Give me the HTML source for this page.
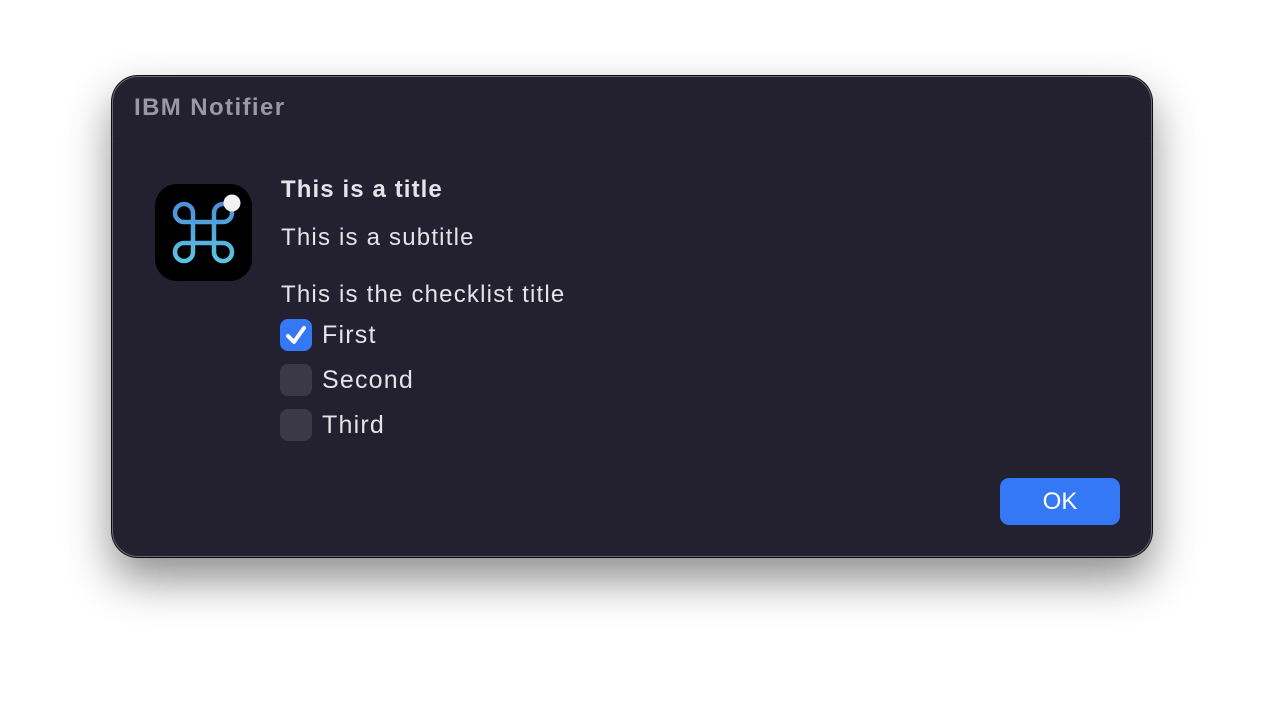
<!DOCTYPE html>
<html><head><style>
body{margin:0;width:1264px;height:706px;background:#fff;position:relative;overflow:hidden;font-family:"Liberation Sans",sans-serif}
.win{position:absolute;left:112px;top:76px;width:1038px;height:479px;background:#232130;border:1px solid #6b6a72;border-radius:26px;box-shadow:0 22px 45px rgba(0,0,0,.45),0 0 0 1px #111}
.t{position:absolute;color:#e4e3e8;white-space:nowrap;letter-spacing:1.2px}
.cb{position:absolute;left:280px;width:32px;height:32px;border-radius:8px;background:#3a3945}
</style></head><body>
<div class="win"></div>
<div class="t" style="left:134px;top:94px;font-size:24px;font-weight:bold;color:#9a98a6;letter-spacing:1.4px">IBM Notifier</div>
<div style="position:absolute;left:113px;top:138px;width:1038px;height:1px;background:#1f1e2a"></div>
<div style="position:absolute;left:155px;top:184px;width:97px;height:97px;border-radius:22px;background:#000"></div>
<svg style="position:absolute;left:155px;top:184px" width="97" height="97" viewBox="0 0 97 97">
<defs><linearGradient id="g" x1="0" y1="0" x2="0" y2="1"><stop offset="0" stop-color="#4a90d9"/><stop offset="1" stop-color="#5ec2e0"/></linearGradient></defs>
<path d="M38 38 V59 M59 38 V59 M38 38 H59 M38 59 H59 M38 38 H29 A9 9 0 1 1 38 29 V38 M59 38 V29 A9 9 0 1 1 68 38 H59 M38 59 H29 A9 9 0 1 0 38 68 V59 M59 59 V68 A9 9 0 1 0 68 59 H59" fill="none" stroke="url(#g)" stroke-width="4.5"/>
<circle cx="77" cy="19" r="8.5" fill="#f2f2f2"/>
</svg>
<div class="t" style="left:281px;top:176px;font-size:24px;font-weight:bold;letter-spacing:1.1px">This is a title</div>
<div class="t" style="left:281px;top:224px;font-size:24px">This is a subtitle</div>
<div class="t" style="left:281px;top:281px;font-size:24px">This is the checklist title</div>
<div class="cb" style="top:319px;background:#3478f6"></div>
<svg style="position:absolute;left:280px;top:319px" width="32" height="32"><path d="M8 17 L14 23 L24 9" fill="none" stroke="#fff" stroke-width="4" stroke-linecap="round" stroke-linejoin="round"/></svg>
<div class="t" style="left:322px;top:321px;font-size:25px">First</div>
<div class="cb" style="top:364px"></div>
<div class="t" style="left:322px;top:366px;font-size:25px">Second</div>
<div class="cb" style="top:409px"></div>
<div class="t" style="left:322px;top:411px;font-size:25px">Third</div>
<div style="position:absolute;left:1000px;top:478px;width:120px;height:47px;border-radius:9px;background:#3478f6;color:#fff;font-size:24px;line-height:47px;text-align:center">OK</div>
</body></html>
